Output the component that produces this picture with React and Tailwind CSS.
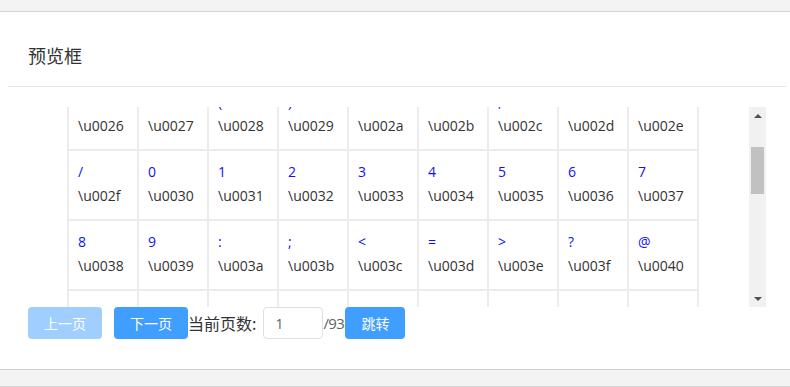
import { useLayoutEffect, useRef } from "react";

const COLS = 9;
const ROWS = 10;
const START = 0x1d;

const cells = Array.from({ length: COLS * ROWS }, (_, i) => {
  const code = START + i;
  return {
    ch: code < 0x20 ? "" : String.fromCharCode(code),
    label: "\\u" + code.toString(16).padStart(4, "0"),
  };
});

const cjk = { fontFamily: '"Noto Sans CJK SC", sans-serif' };

export default function App() {
  const ref = useRef(null);
  useLayoutEffect(() => {
    if (ref.current) ref.current.scrollTop = 98;
  }, []);

  return (
    <div
      className="w-[790px] h-[387px] overflow-hidden bg-white"
      style={{ fontFamily: '"Open Sans", "Noto Sans CJK SC", sans-serif' }}
    >
      <div className="h-[12px] bg-[#f3f3f3] border-b border-[#d4d4d4]" />
      <div className="h-[357px] bg-white flex flex-col">
        <div className="ml-[8px] mr-[4px] h-[75px] border-b border-[#e6e6e6] pl-[20px] pt-[31px]">
          <div className="text-[18px] leading-[24px] text-[#333333]" style={cjk}>
            预览框
          </div>
        </div>
        <div className="h-[20px]" />
        <div className="ml-[28px] w-[738px] h-[200px] flex">
          <div ref={ref} className="flex-1 h-[200px] overflow-hidden">
            <div className="pl-[39px] pb-[30px]">
              <div className="grid grid-cols-[repeat(9,68px)] gap-[2px] p-[2px] bg-[#ececec] w-max">
                {cells.map((c) => (
                  <div key={c.label} className="h-[68px] bg-white pl-[9px] pt-[9px] text-[14px] leading-[24px]">
                    <div className="h-[24px] text-[#1010ff]">{c.ch}</div>
                    <div className="text-[#333333]">{c.label}</div>
                  </div>
                ))}
              </div>
            </div>
          </div>
          <div className="w-[17px] h-[200px] bg-[#f1f1f1] flex flex-col items-center">
            <div className="h-[17px] w-full flex items-center justify-center">
              <div className="w-0 h-0 border-l-[4px] border-r-[4px] border-b-[4px] border-l-transparent border-r-transparent border-b-[#505050]" />
            </div>
            <div className="h-[23px]" />
            <div className="w-[13px] h-[47px] bg-[#c1c1c1]" />
            <div className="flex-1" />
            <div className="h-[17px] w-full flex items-center justify-center">
              <div className="w-0 h-0 border-l-[4px] border-r-[4px] border-t-[4px] border-l-transparent border-r-transparent border-t-[#505050]" />
            </div>
          </div>
        </div>
        <div className="ml-[28px] flex items-center h-[32px]">
          <button className="w-[74px] h-[32px] rounded-[4px] bg-[#a0cfff] text-white text-[14px]" style={cjk}>
            上一页
          </button>
          <button className="ml-[12px] w-[74px] h-[32px] rounded-[4px] bg-[#409eff] text-white text-[14px]" style={cjk}>
            下一页
          </button>
          <span className="text-[16px] text-[#333333]" style={cjk}>
            当前页数:
          </span>
          <div className="ml-[7px] w-[60px] h-[32px] rounded-[4px] border border-[#dcdfe6] flex items-center pl-[11px] text-[14px] text-[#606266]">
            1
          </div>
          <span className="w-[22px] text-[15px] text-[#606266] tracking-[-0.6px] whitespace-nowrap">/93</span>
          <button className="w-[60px] h-[32px] rounded-[4px] bg-[#409eff] text-white text-[14px]" style={cjk}>
            跳转
          </button>
        </div>
      </div>
      <div className="h-[18px] bg-[#f3f3f3] border-t border-[#cfcfcf] border-b border-b-[#d4d4d4]" />
    </div>
  );
}
